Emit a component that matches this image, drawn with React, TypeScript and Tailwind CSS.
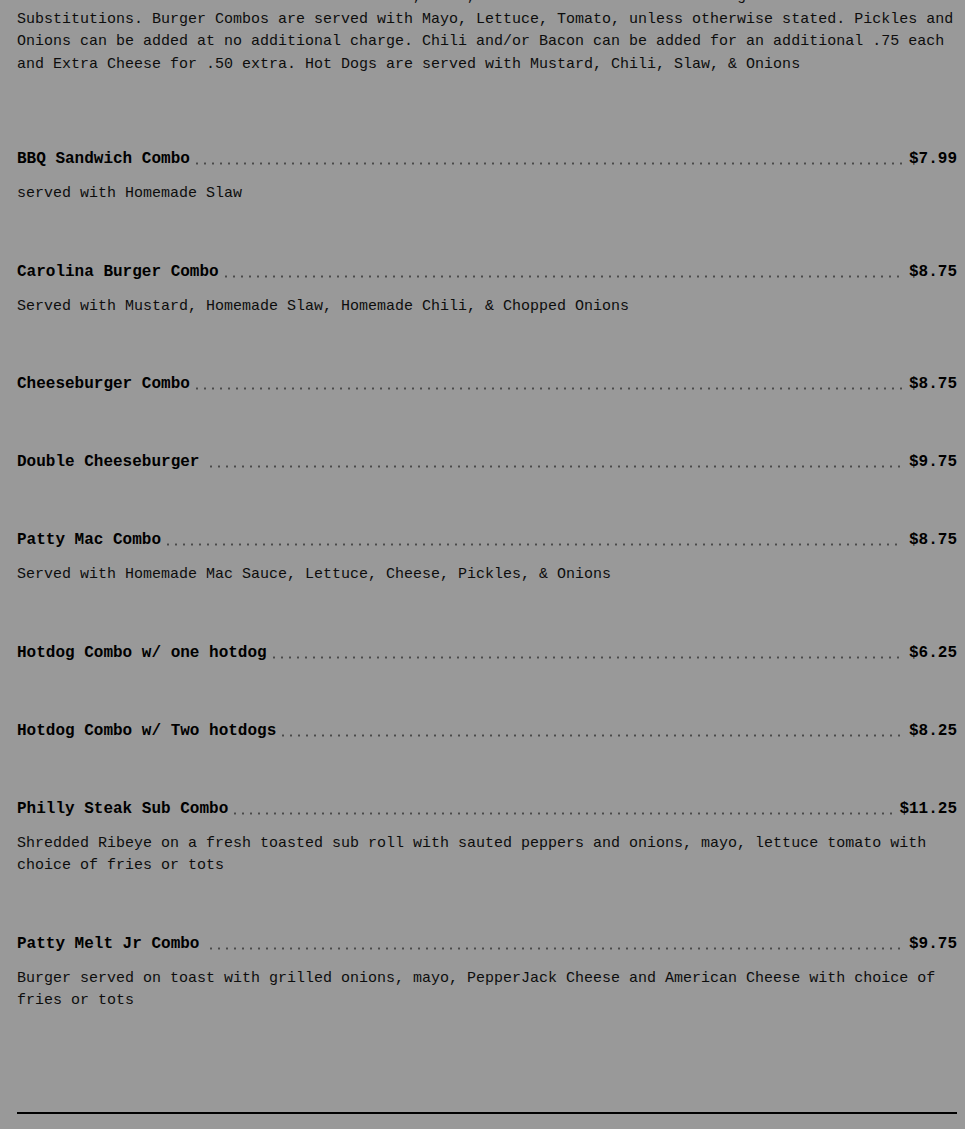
type Item = {
    name: string
    price: string
    desc?: string
    wide?: boolean
}

const items: Item[] = [
    { name: 'BBQ Sandwich Combo', price: '$7.99', desc: 'served with Homemade Slaw' },
    {
        name: 'Carolina Burger Combo',
        price: '$8.75',
        desc: 'Served with Mustard, Homemade Slaw, Homemade Chili, & Chopped Onions',
    },
    { name: 'Cheeseburger Combo', price: '$8.75' },
    { name: 'Double Cheeseburger', price: '$9.75', wide: true },
    {
        name: 'Patty Mac Combo',
        price: '$8.75',
        desc: 'Served with Homemade Mac Sauce, Lettuce, Cheese, Pickles, & Onions',
    },
    { name: 'Hotdog Combo w/ one hotdog', price: '$6.25' },
    { name: 'Hotdog Combo w/ Two hotdogs', price: '$8.25' },
    {
        name: 'Philly Steak Sub Combo',
        price: '$11.25',
        desc: 'Shredded Ribeye on a fresh toasted sub roll with sauted peppers and onions, mayo, lettuce tomato with choice of fries or tots',
    },
    {
        name: 'Patty Melt Jr Combo',
        price: '$9.75',
        wide: true,
        desc: 'Burger served on toast with grilled onions, mayo, PepperJack Cheese and American Cheese with choice of fries or tots',
    },
]

function MenuRow({ item }: { item: Item }) {
    return (
        <div className="mb-[54px]">
            <div className="flex text-[16px] leading-[24px] font-bold text-black">
                <span className="whitespace-nowrap">{item.name}</span>
                <span
                    className={
                        (item.wide ? 'ml-[8px] ' : 'ml-[3px] ') +
                        'flex-1 self-start mt-[15px] h-[3px] mr-[7px] bg-[radial-gradient(circle,#4a4a4a_0.9px,transparent_1.3px)] bg-[length:8px_3px] bg-repeat-x'
                    }
                />
                <span className="whitespace-nowrap">{item.price}</span>
            </div>
            {item.desc && (
                <p className="mt-3 text-[15px] leading-[22.5px] text-[#0d0d0d]">{item.desc}</p>
            )}
        </div>
    )
}

export default function App() {
    return (
        <div
            className="min-h-screen overflow-hidden bg-[#999999] pl-[17px] pr-[8px] pb-4"
            style={{ fontFamily: '"Liberation Mono", "DejaVu Sans Mono", monospace' }}
        >
            <p className="-mt-[14px] text-[15px] leading-[22.5px] text-[#0d0d0d]">
                All Combos include Fries or Tots and a Drink, Side, and Homemade Sweets. No Changes
                Allowed. No Substitutions. Burger Combos are served with Mayo, Lettuce, Tomato, unless
                otherwise stated. Pickles and Onions can be added at no additional charge. Chili and/or
                Bacon can be added for an additional .75 each and Extra Cheese for .50 extra. Hot Dogs
                are served with Mustard, Chili, Slaw, &amp; Onions
            </p>

            <div className="mt-[71px]">
                {items.map((item) => (
                    <MenuRow key={item.name} item={item} />
                ))}
            </div>

            <div className="mt-[99px] h-[2px] bg-black" />
        </div>
    )
}
